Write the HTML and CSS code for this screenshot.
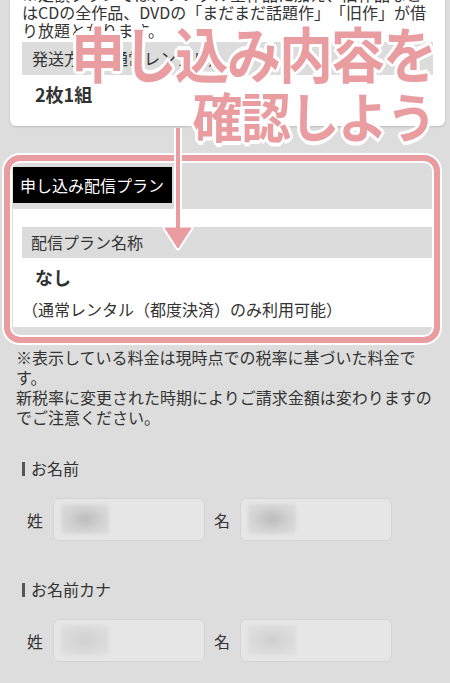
FILE: index.html
```html
<!DOCTYPE html>
<html lang="ja">
<head>
    <meta charset="UTF-8">
    <meta name="viewport" content="width=device-width, initial-scale=1.0">
    <title>申し込み内容の確認</title>
    <link rel="stylesheet" href="styles.css">
</head>
<body>
    <section class="summary">
        <p class="summary-note">※定額プランでは、レンタル全作品に加え、旧作品などはCDの全作品、DVDの「まだまだ話題作」「旧作」が借り放題となります。</p>
        <div class="row-head">発送方法（通常レンタル）</div>
        <div class="row-value">2枚1組</div>
    </section>

    <section class="plan">
        <h2 class="plan-tab">申し込み配信プラン</h2>
        <div class="plan-body">
            <div class="row-head">配信プラン名称</div>
            <div class="row-value">なし</div>
            <p class="plan-note">（通常レンタル（都度決済）のみ利用可能）</p>
        </div>
    </section>

    <p class="tax-note">※表示している料金は現時点での税率に基づいた料金です。<br>新税率に変更された時期によりご請求金額は変わりますのでご注意ください。</p>

    <div class="form-group">
        <h3 class="form-label">お名前</h3>
        <div class="name-row">
            <span class="name-key">姓</span>
            <div class="field"><span class="blur"></span></div>
            <span class="name-key">名</span>
            <div class="field"><span class="blur"></span></div>
        </div>
    </div>

    <div class="form-group">
        <h3 class="form-label">お名前カナ</h3>
        <div class="name-row">
            <span class="name-key">姓</span>
            <div class="field"><span class="blur light"></span></div>
            <span class="name-key">名</span>
            <div class="field"><span class="blur light"></span></div>
        </div>
    </div>

    <!-- annotation drawn over the screenshot -->
    <div class="callout-frame"></div>
    <svg class="callout-arrow" width="40" height="135" viewBox="0 0 40 135">
        <line x1="18" y1="8" x2="18" y2="110" stroke="#fff" stroke-width="8"/>
        <polygon points="5,108 31,108 18,128" fill="#fff" stroke="#fff" stroke-width="5" stroke-linejoin="round"/>
        <line x1="18" y1="8" x2="18" y2="110" stroke="#e99da1" stroke-width="4"/>
        <polygon points="5,108 31,108 18,128" fill="#e99da1" stroke="#e99da1" stroke-width="1" stroke-linejoin="round"/>
    </svg>
    <p class="callout-text">
        <span class="callout-line big">申し込み内容を</span>
        <span class="callout-line">確認しよう</span>
    </p>
</body>
</html>
```

FILE: styles.css
```css
body {
    margin: 0;
    background-color: #dddddd;
    font-family: "Noto Sans CJK JP", sans-serif;
    font-size: 16px;
    color: #333;
    position: relative;
    overflow: hidden;
    text-spacing-trim: space-all;
    font-feature-settings: "chws" 0, "halt" 0;
}
.summary {
    background-color: #fff;
    margin: -17px 5px 0 10px;
    padding: 2px 12px 19px;
    border-radius: 0 0 6px 6px;
    box-shadow: 0 1px 2px rgba(0, 0, 0, 0.15);
}
.summary-note {
    margin: 0;
    line-height: 18px;
}
.row-head {
    background-color: #dcdcdc;
    height: 33px;
    line-height: 33px;
    padding-left: 10px;
    margin-top: 3px;
}
.row-value {
    font-size: 18px;
    font-weight: bold;
    line-height: 26px;
    margin-top: 6px;
    padding-left: 13px;
}
.plan {
    margin: 35px 10px 0;
    padding: 6px 3px 7px;
    border-radius: 8px;
    background-color: #dcdcdc;
}
.plan-tab {
    display: inline-block;
    margin: 0;
    background-color: #000;
    color: #fff;
    font-size: 16px;
    font-weight: normal;
    line-height: 36px;
    padding: 0 8px 0 7px;
}
.plan-body {
    background-color: #fff;
    margin-top: 6px;
    padding: 18px 5px 7px 9px;
}
.plan-body .row-head {
    height: 31px;
    line-height: 31px;
    padding-left: 9px;
    margin-top: 0;
}
.plan-note {
    margin: 8px 0 0;
    line-height: 22px;
}
.tax-note {
    margin: 13px 14px 0 16px;
    line-height: 20px;
}
.form-group {
    margin-top: 30px;
}
.form-group + .form-group {
    margin-top: 37px;
}
.form-label {
    margin: 0 0 0 22px;
    font-size: 16px;
    font-weight: normal;
    line-height: 22px;
}
.form-label::before {
    content: "";
    display: inline-block;
    width: 3px;
    height: 14px;
    margin-right: 6px;
    background-color: #555;
    vertical-align: -1px;
}
.name-row {
    display: flex;
    align-items: center;
    margin-top: 19px;
    padding-left: 27px;
}
.name-key {
    width: 16px;
    margin-right: 10px;
}
.field {
    box-sizing: border-box;
    width: 152px;
    height: 43px;
    margin-right: 9px;
    padding: 5px 7px;
    background-color: #e6e6e6;
    border: 1px solid #d4d4d4;
    border-radius: 6px;
}
.blur {
    display: block;
    width: 48px;
    height: 30px;
    border-radius: 3px;
    background: radial-gradient(ellipse at center, #bcbcbc 0%, #d3d3d3 55%, #dedede 100%);
    filter: blur(1.5px);
}
.blur.light {
    background: radial-gradient(ellipse at center, #d0d0d0 0%, #dadada 55%, #e0e0e0 100%);
}
.callout-frame {
    position: absolute;
    left: 4px;
    top: 155px;
    width: 424px;
    height: 176px;
    border: 6px solid #e99da1;
    border-radius: 16px;
    box-shadow: 0 0 0 2px #fff, inset 0 0 0 2px #fff;
}
.callout-arrow {
    position: absolute;
    left: 160px;
    top: 120px;
}
.callout-text {
    position: absolute;
    right: 15px;
    top: 25px;
    margin: 0;
    text-align: right;
    color: #e99da1;
    font-weight: bold;
    text-shadow: 3px 0 #fff, -3px 0 #fff, 0 3px #fff, 0 -3px #fff,
        2px 2px #fff, -2px -2px #fff, 2px -2px #fff, -2px 2px #fff;
}
.callout-line {
    display: block;
    font-size: 50px;
    line-height: 50px;
    letter-spacing: -1.5px;
    margin-top: 11px;
    transform: scaleY(1.06);
}
.callout-line.big {
    font-size: 54px;
    line-height: 54px;
    letter-spacing: -2px;
    margin-top: 0;
    transform: scaleY(1.12);
}
```
